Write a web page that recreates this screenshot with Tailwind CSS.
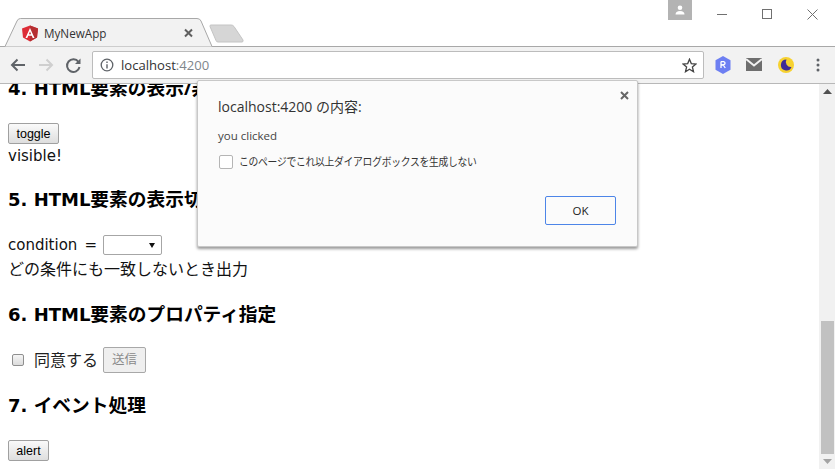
<!DOCTYPE html>
<html lang="ja"><head><meta charset="utf-8"><title>MyNewApp</title>
<script src="https://cdn.jsdelivr.net/npm/@tailwindcss/browser@4"></script></head>
<body class="m-0 w-[835px] h-[469px] overflow-hidden bg-white relative font-['Open_Sans','Noto_Sans_CJK_JP',sans-serif] text-[#111]">
<!-- browser chrome -->
<header class="h-[84px] flex flex-col">
  <div class="h-[46px] relative bg-white flex justify-end items-start">
    <svg class="absolute left-0 top-0 z-10" width="260" height="48" viewBox="0 0 260 48">
      <path d="M0 46.500H5L17 21Q18 18.500 20.500 18.500H197Q200 18.500 201 21L212 46.500" fill="#f2f2f2" stroke="#a8a8a8"/>
      <path d="M5 47.500H212" stroke="#f2f2f2"/>
      <path d="M210 26.500Q209.500 25 211 25H231Q233 25 234 26.500L243 40Q243.500 42 242 42H218Q216.500 42 216 40.500Z" fill="#d6d6d6" stroke="#c4c4c4"/>
      <path d="M30 25.500L38 28.500L37 37.500L30 41.500L23 37.500L22 28.500Z" fill="#dd2c37"/>
      <path d="M30 25.500L38 28.500L37 37.500L30 41.500Z" fill="#b52e31"/>
      <path d="M30 28L25.500 38H27.300L28.200 35.700H31.800L32.700 38H34.500ZM28.900 34.200L30 31.500L31.100 34.200Z" fill="#fff"/>
      <path d="M185 29.500L192 36.500M192 29.500L185 36.500" stroke="#5f5f5f" stroke-width="2"/>
    </svg>
    <span class="absolute z-10 left-[44px] top-[25px] text-[11.700px] leading-[16px] text-[#333]">MyNewApp</span>
    <div class="w-[24px] h-[20px] bg-[#b3b3b3] flex items-center justify-center mr-[143px]">
      <svg width="10" height="10" viewBox="0 0 10 10"><circle cx="5" cy="2.800" r="2.300" fill="#fff"/><path d="M0.500 9.500Q0.500 6 5 6T9.500 9.500Z" fill="#fff"/></svg>
    </div>
    <svg class="absolute left-[710px] top-[5px]" width="115" height="20" viewBox="0 0 115 20" fill="none" stroke="#707070">
      <path d="M7 9.500H17"/><rect x="52.500" y="4.500" width="9" height="9"/><path d="M97.500 4.500L107.500 14.500M107.500 4.500L97.500 14.500"/>
    </svg>
  </div>
  <div class="h-[38px] bg-[#f2f2f2] flex items-center border-t border-b border-t-[#a8a8a8] border-b-[#b8b8b8]">
    <div class="w-[92px] flex shrink-0 items-center">
      <svg width="92" height="24" viewBox="0 0 92 24" fill="none" stroke-width="2">
        <path d="M25 12H12M17.500 6.500L12 12L17.500 17.500" stroke="#5f6368"/>
        <path d="M39 12H52M46.500 6.500L52 12L46.500 17.500" stroke="#cfcfcf"/>
        <path d="M78.500 9A6.300 6.300 0 1 0 79.500 14" stroke="#5f6368"/><path d="M80.500 5.500V11H75Z" fill="#5f6368"/>
      </svg>
    </div>
    <div class="w-[612px] h-[28px] bg-white border border-[#bcbcbc] rounded-[2px] flex items-center">
      <svg class="ml-[7px]" width="14" height="14" viewBox="0 0 14 14" fill="none"><circle cx="7" cy="7" r="5.800" stroke="#5f6368" stroke-width="1.300"/><path d="M7 6.200V10.500M7 3.600V5" stroke="#5f6368" stroke-width="1.400"/></svg>
      <span class="ml-[7px] text-[13.100px] leading-[20px] text-[#333]">localhost<span class="text-[#80868b]">:4200</span></span>
      <svg class="ml-auto mr-[6px]" width="15" height="15" viewBox="0 0 15 15"><path d="M7.500 1.200L9.300 5.600L14 6L10.400 9L11.500 13.700L7.500 11.200L3.500 13.700L4.600 9L1 6L5.700 5.600Z" fill="none" stroke="#444" stroke-width="1.300"/></svg>
    </div>
    <svg class="ml-[9px]" width="122" height="24" viewBox="0 0 122 24">
      <path d="M10 2L17.500 6.300V15.700L10 20L2.500 15.700V6.300Z" fill="#6d7ff2" transform="translate(0 1)"/>
      <path d="M8 8.500V15M8 8.700H10.800Q12.300 9 12 10.700Q11.800 12 8 12M10.200 12L12.300 15" fill="none" stroke="#fff" stroke-width="1.300"/>
      <path d="M33 5H49V18H33Z" fill="#6e6e6e"/><path d="M33 6L41 12.500L49 6" fill="none" stroke="#f2f2f2" stroke-width="2"/>
      <circle cx="73" cy="12" r="8" fill="#f7d230"/><path d="M73.500 6.500A5.500 5.500 0 1 0 78.500 14A5 5 0 0 1 73.500 6.500Z" fill="#3f2b96"/>
      <circle cx="105" cy="7" r="1.500" fill="#5f6368"/><circle cx="105" cy="12" r="1.500" fill="#5f6368"/><circle cx="105" cy="17" r="1.500" fill="#5f6368"/>
    </svg>
  </div>
</header>
<!-- page -->
<div class="flex h-[385px]">
  <main class="w-[819px] h-[385px] overflow-hidden pl-[8px] text-[16px] leading-[24px]">
    <h3 class="h-[24px] -mt-[8px] text-[18.720px] leading-[24px] font-bold text-black whitespace-nowrap"><span class="font-['DejaVu_Sans'] text-[18px]">4. HTML</span>要素の表示/非表示</h3>
    <button class="block mt-[23px] w-[51px] h-[21px] border border-[#a0a0a0] rounded-[2px] bg-gradient-to-b from-[#fafafa] to-[#dedede] text-[12.500px] leading-[18px] font-['Liberation_Sans'] text-black">toggle</button>
    <p class="h-[24px] font-['DejaVu_Sans'] text-[15px]">visible!</p>
    <h3 class="h-[24px] mt-[19px] text-[18.720px] leading-[24px] font-bold text-black whitespace-nowrap"><span class="font-['DejaVu_Sans'] text-[18px]">5. HTML</span>要素の表示切替</h3>
    <div class="h-[24px] mt-[22px] flex items-center">
      <span class="w-[95px] whitespace-pre font-['DejaVu_Sans'] text-[15px] [word-spacing:2.500px]">condition =</span>
      <span class="w-[59px] h-[20px] border border-[#a6a6a6] rounded-[2px] bg-white flex items-center justify-end pr-[6px]"><svg width="6" height="5" viewBox="0 0 6 5"><path d="M0 0H6L3 5Z" fill="#111"/></svg></span>
    </div>
    <p class="h-[24px]">どの条件にも一致しないとき出力</p>
    <h3 class="h-[24px] mt-[21px] text-[18.720px] leading-[24px] font-bold text-black whitespace-nowrap"><span class="font-['DejaVu_Sans'] text-[18px]">6. HTML</span>要素のプロパティ指定</h3>
    <div class="h-[26px] mt-[21px] flex items-center">
      <span class="w-[12px] h-[12px] ml-[4px] mr-[10px] border border-[#8f8f8f] rounded-[2px] bg-gradient-to-b from-[#f5f5f5] to-[#dcdcdc]"></span>
      <span class="w-[65px] whitespace-nowrap text-[#222]">同意する</span>
      <button class="ml-[4px] w-[43px] h-[26px] border border-[#a8a8a8] rounded-[2px] bg-[#efefef] text-[12.500px] text-[#8a8a8a]">送信</button>
    </div>
    <h3 class="h-[24px] mt-[20px] text-[18.720px] leading-[24px] font-bold text-black whitespace-nowrap"><span class="font-['DejaVu_Sans'] text-[18px]">7. </span>イベント処理</h3>
    <button class="block mt-[23px] w-[41px] h-[21px] border border-[#a0a0a0] rounded-[2px] bg-gradient-to-b from-[#fafafa] to-[#dedede] text-[12.500px] leading-[18px] font-['Liberation_Sans'] text-black">alert</button>
  </main>
  <aside class="w-[16px] h-[385px] bg-[#f1f1f1] flex flex-col items-center">
    <svg class="mt-[5px]" width="9" height="5" viewBox="0 0 9 5"><path d="M4.500 0L9 5H0Z" fill="#505050"/></svg>
    <div class="w-[13px] h-[133px] mt-[227px] ml-[1px] bg-[#c1c1c1]"></div>
    <svg class="mt-[5px]" width="9" height="5" viewBox="0 0 9 5"><path d="M0 0H9L4.500 5Z" fill="#a3a3a3"/></svg>
  </aside>
</div>
<!-- alert dialog -->
<div class="absolute z-20 left-[197px] top-[80px] w-[441px] h-[167px] bg-[#fbfbfb] border border-[#c8c8c8] rounded-[2px] shadow-[0_2px_3px_rgba(0,0,0,0.4)]">
  <svg class="absolute left-[422px] top-[10px]" width="9" height="9" viewBox="0 0 9 9"><path d="M1 1L8 8M8 1L1 8" stroke="#666" stroke-width="2"/></svg>
  <p class="absolute left-[20px] top-[16px] text-[14px] leading-[20px] text-[#333] whitespace-nowrap">localhost:4200 の内容:</p>
  <p class="absolute left-[20px] top-[47px] text-[11.500px] leading-[16px] text-[#444] whitespace-nowrap">you clicked</p>
  <div class="absolute left-[21px] top-[73px] flex items-center gap-[6px]">
    <span class="w-[14px] h-[14px] border border-[#b5b5b5] rounded-[2px] bg-white"></span>
    <span class="text-[11px] leading-[16px] text-[#333] whitespace-nowrap tracking-[-0.300px] origin-left scale-x-[0.89]">このページでこれ以上ダイアログボックスを生成しない</span>
  </div>
  <button class="absolute left-[347px] top-[115px] w-[71px] h-[29px] border border-[#4d85e8] rounded-[2px] bg-[#fbfbfb] text-[11.500px] text-[#222]">OK</button>
</div>
</body></html>
